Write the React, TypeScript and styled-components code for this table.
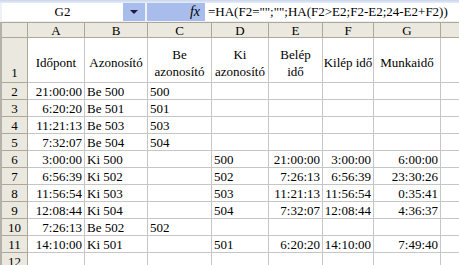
import React from "react";
import styled, { createGlobalStyle } from "styled-components";

const Global = createGlobalStyle`
  html, body { margin: 0; padding: 0; background: #ffffff; overflow: hidden; }
  body { font-family: "Liberation Serif", "Times New Roman", serif; font-size: 12px; color: #000; }
`;

const Page = styled.div`
  width: 459px;
  height: 265px;
  overflow: hidden;
  background: #ffffff;
  font-family: "Liberation Serif", "Times New Roman", serif;
`;

const TopStrip = styled.div`
  height: 3px;
  background: linear-gradient(#c9d6ef, #e8edf7);
`;

const FormulaBar = styled.div`
  display: flex;
  height: 18px;
  padding-bottom: 1px;
  background: #eef1f8;
`;

const NameBox = styled.div`
  width: 121px;
  margin-left: 2px;
  background: #fff;
  display: flex;
  align-items: center;
  justify-content: center;
  font-size: 13px;
`;

const DropButton = styled.div`
  width: 22px;
  background: #a9bdec;
  display: flex;
  align-items: center;
  justify-content: center;
`;

const FxBox = styled.div`
  width: 58px;
  margin-left: 2px;
  background: #a9bdec;
  display: flex;
  align-items: center;
  justify-content: flex-end;
  padding-right: 5px;
  box-sizing: border-box;
  font-style: italic;
  font-size: 14px;
  font-family: "Liberation Serif", serif;
`;

const FormulaText = styled.div`
  flex: 1;
  background: #fff;
  display: flex;
  align-items: center;
  padding-left: 3px;
  font-size: 13px;
  white-space: nowrap;
  overflow: hidden;
`;

const Grid = styled.div`
  display: grid;
  grid-template-columns: 26px 57px 63px 64px 57px 54px 51px 67px 40px;
  grid-template-rows: 15px 45px repeat(11, 17px);
  border-left: 2px solid #b4b2a8;
  border-top: 1px solid #aca899;
`;

const ColHead = styled.div`
  background: #ebe9df;
  border-right: 1px solid #aca899;
  border-bottom: 1px solid #aca899;
  display: flex;
  align-items: center;
  justify-content: center;
  font-size: 13px;
  line-height: 1;
`;

const RowHead = styled.div<{ $bottom?: boolean }>`
  background: #ebe9df;
  border-right: 1px solid #aca899;
  border-bottom: 1px solid #aca899;
  display: flex;
  align-items: ${(p) => (p.$bottom ? "flex-end" : "center")};
  justify-content: center;
  font-size: 13px;
  line-height: 1;
  padding-bottom: ${(p) => (p.$bottom ? "3px" : "0")};
`;

const Cell = styled.div<{ $align?: "left" | "right" | "center"; $title?: boolean }>`
  border-right: 1px solid #c6c6c6;
  border-bottom: 1px solid #c6c6c6;
  display: flex;
  align-items: center;
  justify-content: ${(p) =>
    p.$align === "right" ? "flex-end" : p.$align === "center" ? "center" : "flex-start"};
  text-align: ${(p) => p.$align || "left"};
  padding: ${(p) => (p.$title ? "5px 0 0" : "0 2px")};
  font-size: 13px;
  line-height: 17px;
  white-space: nowrap;
  overflow: visible;
  min-width: 0;
`;

const HeadText = styled.div`
  white-space: nowrap;
  text-align: center;
`;

const cols = ["A", "B", "C", "D", "E", "F", "G", ""];

const headers: string[][] = [
  ["Időpont"],
  ["Azonosító"],
  ["Be", "azonosító"],
  ["Ki", "azonosító"],
  ["Belép", "idő"],
  ["Kilép idő"],
  ["Munkaidő"],
  [],
];

const rows: string[][] = [
  ["21:00:00", "Be 500", "500", "", "", "", ""],
  ["6:20:20", "Be 501", "501", "", "", "", ""],
  ["11:21:13", "Be 503", "503", "", "", "", ""],
  ["7:32:07", "Be 504", "504", "", "", "", ""],
  ["3:00:00", "Ki 500", "", "500", "21:00:00", "3:00:00", "6:00:00"],
  ["6:56:39", "Ki 502", "", "502", "7:26:13", "6:56:39", "23:30:26"],
  ["11:56:54", "Ki 503", "", "503", "11:21:13", "11:56:54", "0:35:41"],
  ["12:08:44", "Ki 504", "", "504", "7:32:07", "12:08:44", "4:36:37"],
  ["7:26:13", "Be 502", "502", "", "", "", ""],
  ["14:10:00", "Ki 501", "", "501", "6:20:20", "14:10:00", "7:49:40"],
  ["", "", "", "", "", "", ""],
];

const aligns: ("left" | "right")[] = ["right", "left", "left", "left", "right", "right", "right"];

export default function App() {
  return (
    <Page>
      <Global />
      <TopStrip />
      <FormulaBar>
        <NameBox>G2</NameBox>
        <DropButton>
          <svg width="8" height="5" viewBox="0 0 8 5">
            <path d="M0 0 L8 0 L4 4 Z" fill="#1a1a40" />
          </svg>
        </DropButton>
        <FxBox>fx</FxBox>
        <FormulaText>=HA(F2="";"";HA(F2&gt;E2;F2-E2;24-E2+F2))</FormulaText>
      </FormulaBar>
      <Grid>
        <ColHead />
        {cols.map((c, i) => (
          <ColHead key={"h" + i}>{c}</ColHead>
        ))}
        <RowHead $bottom>1</RowHead>
        {headers.map((h, i) => (
          <Cell key={"t" + i} $align="center" $title>
            <HeadText>
              {h.map((line, j) => (
                <div key={j}>{line}</div>
              ))}
            </HeadText>
          </Cell>
        ))}
        {rows.map((r, ri) => (
          <React.Fragment key={"r" + ri}>
            <RowHead>{ri + 2}</RowHead>
            {r.map((v, ci) => (
              <Cell key={ci} $align={aligns[ci]}>
                {v}
              </Cell>
            ))}
            <Cell />
          </React.Fragment>
        ))}
      </Grid>
    </Page>
  );
}
